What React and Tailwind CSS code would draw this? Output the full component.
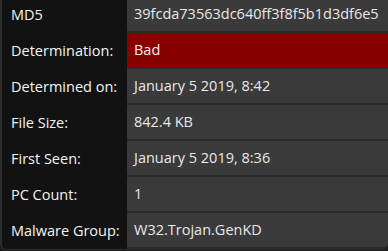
export default function App() {
  const rows = [
    ["MD5", "39fcda73563dc640ff3f8f5b1d3df6e5"],
    ["Determination:", "Bad", true],
    ["Determined on:", "January 5 2019, 8:42"],
    ["File Size:", "842.4 KB"],
    ["First Seen:", "January 5 2019, 8:36"],
    ["PC Count:", "1"],
    ["Malware Group:", "W32.Trojan.GenKD"],
  ];
  return (
    <div className="w-[388px] h-[251px] overflow-hidden bg-[#1c1c1c]">
      <div
        className="-mt-[3px] w-[388px] rounded-b-[6px] border-l-[2px] border-b-[1px] border-[#2c2c2c] bg-[#121212] overflow-hidden"
        style={{ fontFamily: '"Open Sans", sans-serif' }}
      >
        {rows.map(([label, value, bad], i) => (
          <div key={i} className="flex h-[36px]">
            <div className="w-[125px] shrink-0 flex items-center pl-[9px] text-[14.5px] text-[#f4f4f4] bg-[#121212]">
              {label}
            </div>
            <div
              className={
                "flex-1 flex items-center pl-[7px] text-[14.5px] border-b-[2px] border-[#2a2a2a] " +
                (bad ? "bg-[#880000] text-[#f0f0f0]" : "bg-[#3a3a3a] text-[#e8e8e8]")
              }
            >
              {value}
            </div>
          </div>
        ))}
      </div>
    </div>
  );
}
